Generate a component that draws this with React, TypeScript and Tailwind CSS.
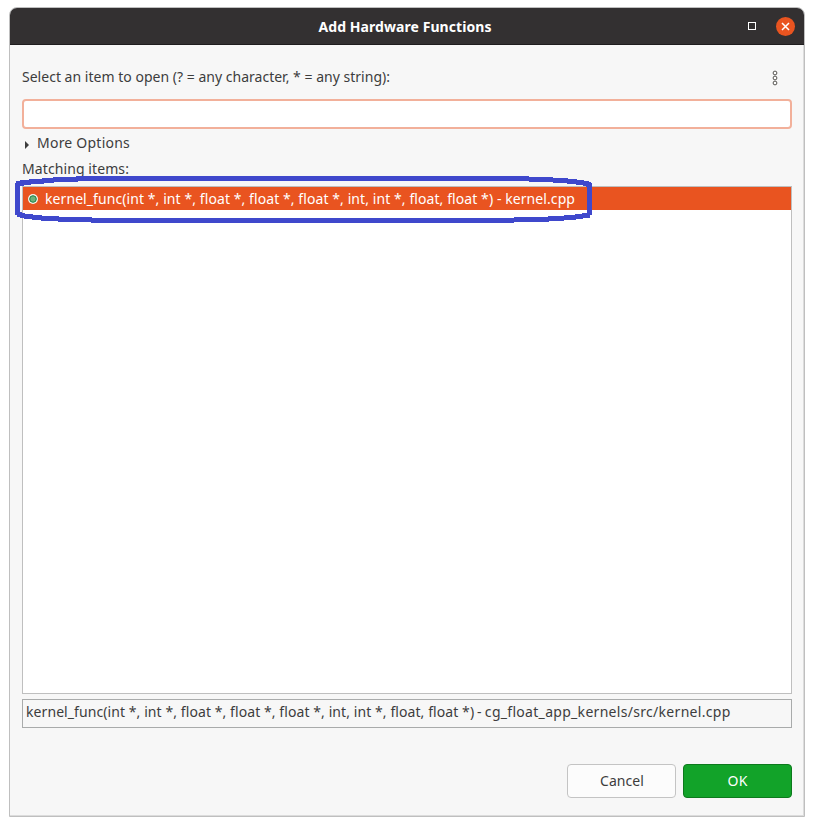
const SIGNATURE = "kernel_func(int *, int *, float *, float *, float *, int, int *, float, float *)";

// [x, y, width] of each pen segment; the pen is 5px thick
const PEN_SEGMENTS = [
  [16, 181, 8],
  [20, 180, 11],
  [29, 179, 15],
  [42, 178, 12],
  [53, 177, 25],
  [76, 176, 453],
  [529, 177, 24],
  [553, 178, 15],
  [567, 179, 10],
  [576, 180, 8],
  [583, 181, 6],
  [586, 182, 5],
  [582, 213, 8],
  [575, 214, 8],
  [564, 215, 12],
  [548, 216, 16],
  [514, 217, 35],
  [91, 218, 423],
  [58, 217, 34],
  [41, 216, 18],
  [32, 215, 10],
  [24, 214, 9],
  [20, 213, 5],
  [17, 212, 5],
];

function TitleBar() {
  return (
    <header className="relative flex h-[37px] shrink-0 items-center justify-center border-b border-[#1f1d1e] bg-[#333031] pt-0.5 pr-1">
      <h1 className="text-[14px] leading-5 font-bold tracking-[0.066px] text-white">Add Hardware Functions</h1>
      <div className="absolute top-0 right-[9px] flex h-9 items-center gap-5">
        <button aria-label="Maximize" className="size-2 border border-white" />
        <button aria-label="Close" className="flex size-[19px] items-center justify-center rounded-full bg-[#e95420]">
          <svg viewBox="0 0 9 9" className="size-[9px]" stroke="#fff" strokeWidth="1.5" fill="none">
            <path d="M1 1l7 7M8 1L1 8" />
          </svg>
        </button>
      </div>
    </header>
  );
}

function MenuDots() {
  return (
    <svg viewBox="0 0 6 16" className="mt-0.5 h-4 w-1.5" fill="#fff" stroke="#55534f" strokeWidth="1">
      {[3, 8, 13].map((cy) => (
        <circle key={cy} cx="3" cy={cy} r="1.9" />
      ))}
    </svg>
  );
}

/** Hand-drawn marker loop around the selected entry. */
function Marker() {
  return (
    <svg
      viewBox="15 176 577 48"
      className="pointer-events-none absolute -top-[11px] -left-2 h-12 w-[577px]"
      fill="#3f48cc"
      shapeRendering="crispEdges"
    >
      <rect x="15" y="183" width="5" height="32" />
      <rect x="587" y="183" width="5" height="32" />
      {PEN_SEGMENTS.map(([x, y, w]) => (
        <rect key={`${x}-${y}`} x={x} y={y} width={w} height="5" />
      ))}
    </svg>
  );
}

export default function App() {
  return (
    <div className="h-[826px] w-[814px] bg-white pt-[7px] pl-[9px] font-['Noto_Sans',sans-serif] text-[14px] leading-5 text-[#3d3d3d]">
      <div className="flex h-[810px] w-[796px] flex-col overflow-hidden rounded-t-lg border border-[#bfbfbf] bg-[#f7f7f7] shadow-[inset_-1px_-1px_0_#dcdcdc]">
        <TitleBar />
        <main className="flex flex-1 flex-col px-3">
          <div className="mt-[22px] flex h-5 items-center justify-between pr-[14px]">
            <label htmlFor="filter" className="tracking-[0.016px]">
              Select an item to open (? = any character, * = any string):
            </label>
            <MenuDots />
          </div>
          <input id="filter" className="mt-3 h-[30px] w-full rounded border-2 border-[#f2b09a] bg-white px-2 outline-none" />
          <div className="mt-1 flex h-5 items-center">
            <svg viewBox="0 0 5 8" className="mt-[3px] ml-[3px] h-2 w-[5px]" fill="#3d3d3d">
              <path d="M0 0l4 4-4 4z" />
            </svg>
            <span className="ml-[7px] tracking-[0.23px]">More Options</span>
          </div>
          <div className="mt-1.5 h-5 tracking-[0.093px]">Matching items:</div>
          <div className="relative mt-[7px] h-[508px] border border-[#bfbfbf] bg-white">
            <div className="flex h-[23px] items-center bg-[#e95420] pl-[5px] text-white">
              <svg viewBox="0 0 10 10" className="mt-px size-[10px]">
                <circle cx="5" cy="5" r="5" fill="#f4f6ec" />
                <circle cx="5" cy="5" r="3.3" fill="#6fb27c" stroke="#1c7f45" />
              </svg>
              <span className="ml-[7px] tracking-[0.081px] whitespace-pre">{SIGNATURE} - kernel.cpp</span>
            </div>
            <Marker />
          </div>
          <div className="mt-[5px] h-[29px] border border-[#a9abab] pt-[2px] pl-[3px] whitespace-pre">
            <span className="tracking-[0.081px]">{SIGNATURE}</span>
            <span className="tracking-[0.3px] [word-spacing:-1px]"> - cg_float_app_kernels/src/kernel.cpp</span>
          </div>
          <div className="mt-9 flex justify-end gap-[7px]">
            <button className="h-[34px] w-[109px] rounded border border-[#c4c4c4] bg-[#fcfcfc] pl-px tracking-[0.07px]">Cancel</button>
            <button className="h-[34px] w-[109px] rounded border border-[#0d7a1d] bg-[#12a329] tracking-[0.2px] text-white">OK</button>
          </div>
        </main>
      </div>
    </div>
  );
}
